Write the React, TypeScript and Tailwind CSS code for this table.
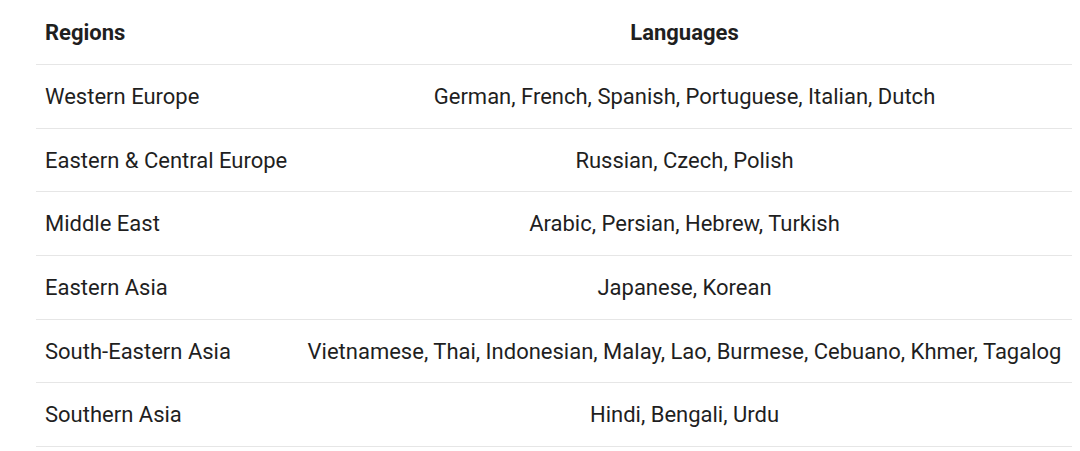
import React from "react";

const rows: [string, string][] = [
  ["Western Europe", "German, French, Spanish, Portuguese, Italian, Dutch"],
  ["Eastern & Central Europe", "Russian, Czech, Polish"],
  ["Middle East", "Arabic, Persian, Hebrew, Turkish"],
  ["Eastern Asia", "Japanese, Korean"],
  ["South-Eastern Asia", "Vietnamese, Thai, Indonesian, Malay, Lao, Burmese, Cebuano, Khmer, Tagalog"],
  ["Southern Asia", "Hindi, Bengali, Urdu"],
];

export default function App() {
  return (
    <div className="w-[1080px] h-[451px] bg-white overflow-hidden" style={{ fontFamily: "Roboto, 'Liberation Sans', sans-serif" }}>
      <div className="ml-[36px] w-[1036px] text-[22px] text-[#1f1f1f]">
        <div className="flex h-[65px] border-b border-[#e6e6e6] items-center font-bold">
          <div className="w-[261px] px-[9px]">Regions</div>
          <div className="flex-1 text-center">Languages</div>
        </div>
        {rows.map(([r, l]) => (
          <div key={r} className="flex h-[63.7px] border-b border-[#e6e6e6] items-center">
            <div className="w-[261px] px-[9px] whitespace-nowrap">{r}</div>
            <div className="flex-1 text-center whitespace-nowrap">{l}</div>
          </div>
        ))}
      </div>
    </div>
  );
}
